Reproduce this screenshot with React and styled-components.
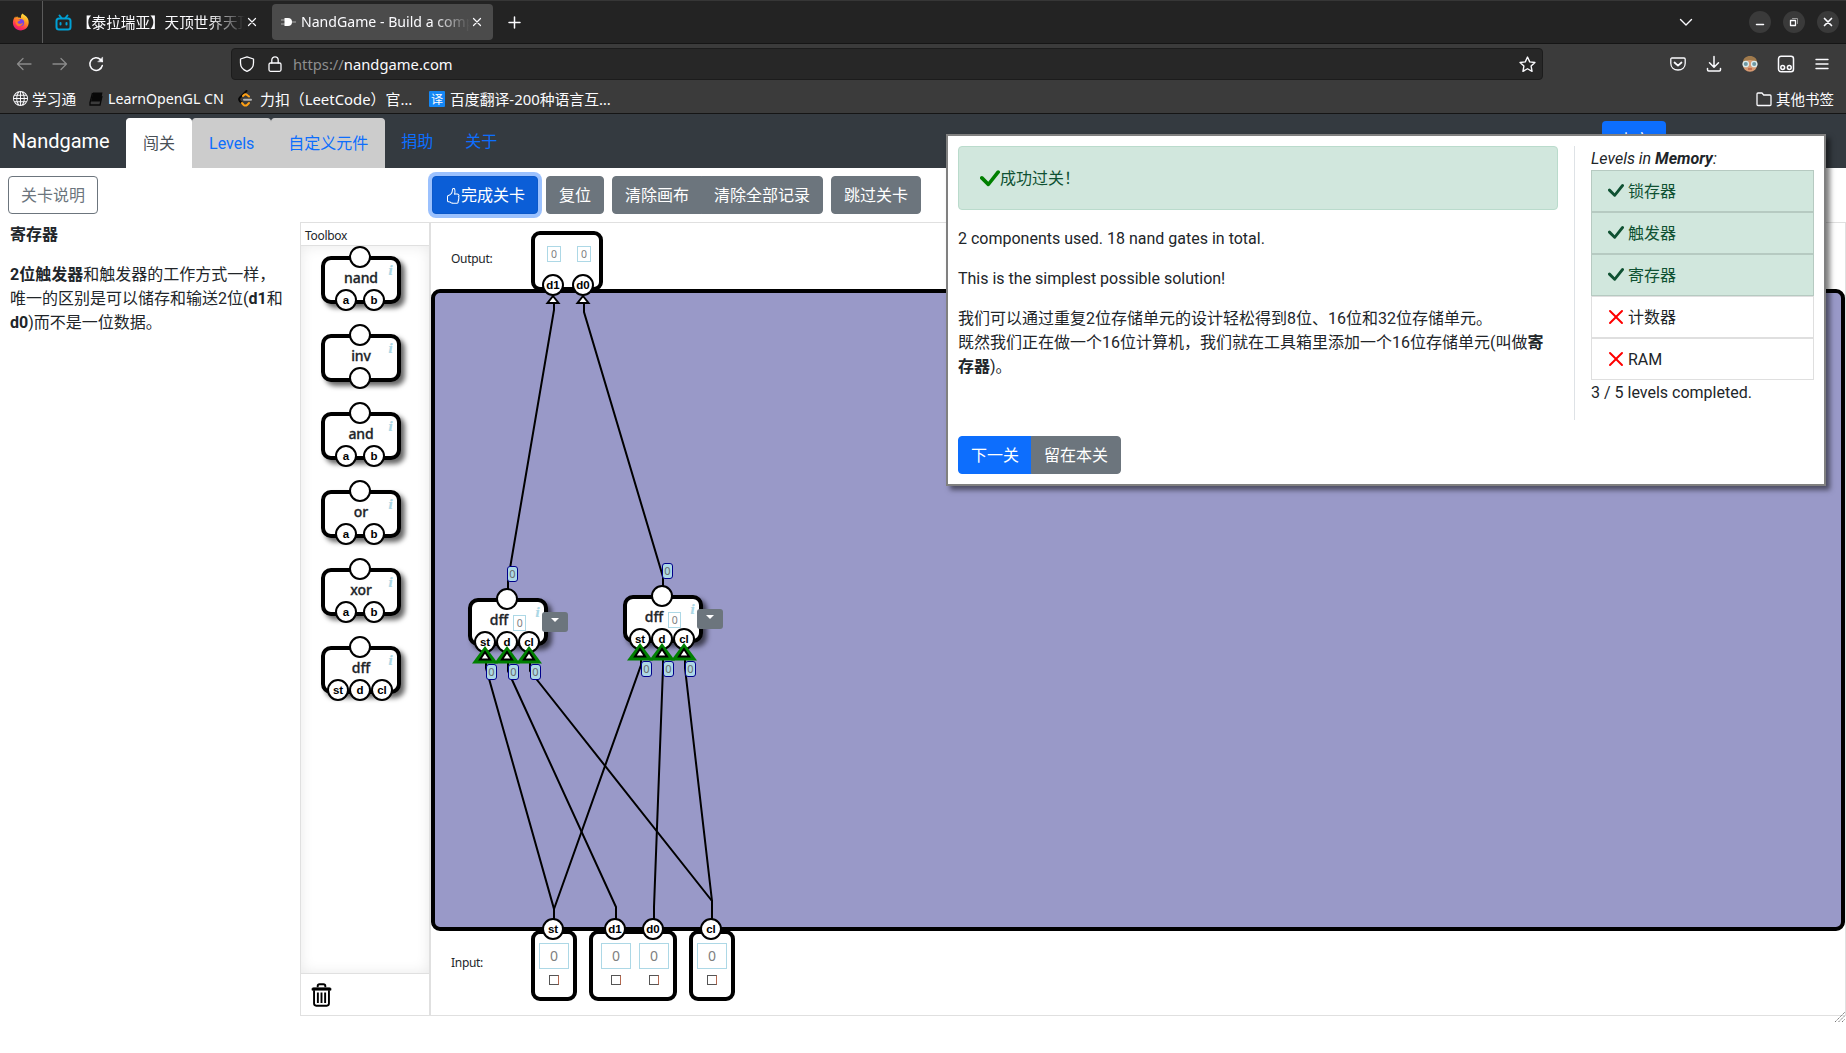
import React from "react";
import styled, { createGlobalStyle, css } from "styled-components";
import { BsHandThumbsUp, BsGlobe } from "react-icons/bs";

const uiFont = `"Noto Sans", "Noto Sans CJK SC", sans-serif`;
const pageFont = `Roboto, "Noto Sans CJK SC", sans-serif`;

const GlobalStyle = createGlobalStyle`
  *, *::before, *::after { box-sizing: border-box; }
  body { margin: 0; background: #fff; overflow: hidden; }
  p { margin: 0 0 16px; }
  svg { flex: none; }
`;

const Window = styled.div`
  width: 1846px;
  height: 1053px;
  display: flex;
  flex-direction: column;
  font-family: ${pageFont};
  font-size: 16px;
  line-height: 24px;
  color: #212529;
`;

/* ---------- browser chrome ---------- */

const TabStrip = styled.div`
  height: 44px;
  flex: none;
  display: flex;
  align-items: center;
  background: #232323;
  border-top: 1px solid #363636;
  border-bottom: 1px solid #151515;
  font: 14.5px/20px ${uiFont};
  color: #fbfbfe;
`;

const PinnedTab = styled.div`
  width: 43px;
  height: 100%;
  display: flex;
  align-items: center;
  justify-content: center;
  border-right: 1px solid #5b5b5b;
  margin-right: 4px;
`;

const Tab = styled.div`
  width: ${(p) => p.$width}px;
  height: 36px;
  display: flex;
  align-items: center;
  gap: ${(p) => p.$gap}px;
  padding: 0 11px 0 8px;
  border-radius: 4px;
  background: ${(p) => (p.$active ? "#4b4b4b" : "transparent")};
  margin-right: 4px;
`;

const TabTitle = styled.span`
  flex: 1;
  min-width: 0;
  margin-right: -3px;
  white-space: nowrap;
  font-size: ${(p) => p.$size}px;
  mask-image: linear-gradient(to right, #000 calc(100% - 36px), transparent 100%);
`;

const NewTab = styled.div`
  display: flex;
  margin-left: 11px;
`;

const WindowControls = styled.div`
  margin-left: auto;
  margin-right: 7px;
  display: flex;
  align-items: center;
  gap: 12px;
  svg { display: block; }
`;

const ControlCircle = styled.div`
  width: 22px;
  height: 22px;
  border-radius: 50%;
  background: #3a3a3a;
  display: flex;
  align-items: center;
  justify-content: center;
`;

const ListTabs = styled.div`
  margin-right: 44px;
`;

const NavBar = styled.div`
  height: 40px;
  flex: none;
  display: flex;
  align-items: center;
  background: #3b3b3b;
  padding: 0 15px 0 16px;
`;

const NavButtons = styled.div`
  display: flex;
  gap: 20px;
  width: 215px;
`;

const UrlBar = styled.div`
  width: 1312px;
  height: 32px;
  display: flex;
  align-items: center;
  background: #272727;
  border: 1px solid #1c1c1c;
  border-radius: 4px;
  padding: 0 6px 0 7px;
  font: 14.75px/20px ${uiFont};
  color: #fbfbfe;
`;

const UrlText = styled.span`
  flex: 1;
  margin-left: 10px;
`;

const Scheme = styled.span`
  color: #8e8e8e;
`;

const ShieldSlot = styled.span`
  display: flex;
  margin-right: 12px;
`;

const Extensions = styled.div`
  margin-left: auto;
  display: flex;
  gap: 18px;
`;

const BookmarkBar = styled.div`
  height: 30px;
  flex: none;
  display: flex;
  align-items: center;
  background: #3b3b3b;
  border-bottom: 1px solid #151515;
  padding: 0 12px 0 13px;
  font: 15px/20px ${uiFont};
  color: #fbfbfe;
`;

const Bookmark = styled.div`
  display: flex;
  align-items: center;
  gap: ${(p) => p.$gap || 4}px;
  width: ${(p) => (p.$width ? p.$width + "px" : "auto")};
  font-size: ${(p) => p.$size || 15}px;
  white-space: nowrap;
  margin-left: ${(p) => (p.$end ? "auto" : 0)};
`;

const TranslateBadge = styled.span`
  width: 16px;
  height: 16px;
  background: #1487f5;
  border-radius: 1px;
  font: 12px/15px "Noto Sans CJK SC", sans-serif;
  text-align: center;
`;

/* ---------- page header ---------- */

const Header = styled.header`
  height: 54px;
  flex: none;
  display: flex;
  align-items: flex-start;
  background: #343a40;
  padding: 4px 12px 0;
`;

const Brand = styled.div`
  width: 114px;
  font-size: 20px;
  line-height: 30px;
  padding-top: 8px;
  color: #fff;
`;

const NavTab = styled.div`
  height: 50px;
  padding: 13px 16px 0;
  border: 1px solid ${(p) => (p.$active ? "#fff" : "#ccc")};
  border-bottom: 0;
  border-radius: 4px 4px 0 0;
  background: ${(p) => (p.$active ? "#fff" : "#ccc")};
  color: ${(p) => (p.$active ? "#495057" : "#0d6efd")};
`;

const NavLink = styled.div`
  padding: 12px 16px 0;
  color: #0d6efd;
`;

const LangButton = styled.div`
  width: 64px;
  height: 38px;
  margin: 3px 168px 0 auto;
  border-radius: 4px;
  background: #0d6efd;
  color: #fff;
  text-align: center;
  line-height: 40px;
`;

/* ---------- page body ---------- */

const Body = styled.div`
  display: flex;
  flex: 1;
  min-height: 0;
`;

const Sidebar = styled.aside`
  width: 300px;
  flex: none;
  padding: 8px 8px 0;
`;

const Instructions = styled.div`
  padding: 9px 0 0 2px;
  white-space: nowrap;
`;

const Button = styled.button`
  height: 38px;
  font: 16px/24px ${pageFont};
  padding: 1px 12px 0;
  border: 1px solid #6c757d;
  border-radius: 4px;
  background: #6c757d;
  color: #fff;
  display: inline-flex;
  align-items: center;
  justify-content: center;
  white-space: nowrap;
  ${(p) =>
    p.$outline &&
    css`
      background: #fff;
      color: #6c757d;
    `}
  ${(p) =>
    p.$primary &&
    css`
      background: #0d6efd;
      border-color: #0d6efd;
    `}
  ${(p) =>
    p.$focused &&
    css`
      background: #0b5ed7;
      border-color: #0a58ca;
      box-shadow: 0 0 0 4px #9bc1fe;
    `}
`;

const ButtonGroup = styled.div`
  display: flex;
  ${Button}:first-child { border-radius: 4px 0 0 4px; }
  ${Button}:last-child { border-radius: 0 4px 4px 0; margin-left: -1px; }
`;

const Main = styled.main`
  flex: 1;
  display: flex;
  flex-direction: column;
`;

const Toolbar = styled.div`
  height: 54px;
  flex: none;
  display: flex;
  gap: 8px;
  padding: 8px 0 0 132px;
`;

const Editor = styled.div`
  height: 794px;
  display: flex;
`;

const Toolbox = styled.section`
  width: 130px;
  display: flex;
  flex-direction: column;
  border: 1px solid #e0e0e0;
`;

const ToolboxTitle = styled.div`
  height: 23px;
  border-bottom: 1px solid #e0e0e0;
  padding: 4px 0 0 4px;
  font: 12px/18px ${uiFont};
  letter-spacing: -0.3px;
`;

const ToolboxList = styled.div`
  flex: 1;
  display: flex;
  flex-direction: column;
  align-items: center;
  gap: 30px;
  padding: 10px 8px 0 0;
  box-shadow: inset 0 0 14px #e9e9e9;
`;

const TrashBar = styled.div`
  height: 42px;
  border-top: 1px solid #e0e0e0;
  padding: 9px 0 0 10px;
`;

/* ---------- diagram ---------- */

const Workspace = styled.section`
  position: relative;
  flex: 1;
  border: 1px solid #e0e0e0;
  padding-top: 66px;
  font: 12px/18px ${uiFont};
`;

const Board = styled.div`
  height: 642px;
  border: 4px solid #000;
  border-radius: 9px;
  background: #9999c8;
`;

const Placed = styled.div`
  position: absolute;
  left: ${(p) => p.$x}px;
  top: ${(p) => p.$y}px;
`;

const RowLabel = styled(Placed)`
  letter-spacing: -0.3px;
`;

const Wires = styled.svg`
  position: absolute;
  left: 0;
  top: 0;
  overflow: visible;
`;

const Gate = styled.div`
  position: relative;
  flex: none;
  width: 80px;
  height: 48px;
  border: 4px solid #000;
  border-radius: 10px;
  background: #fff;
  box-shadow: 4px 4px 5px rgba(0, 0, 0, 0.6);
  display: flex;
  justify-content: center;
  gap: 5px;
  padding-top: 8px;
  font: 500 14px/20px ${uiFont};
  letter-spacing: -0.1px;
  -webkit-text-stroke: 0.3px;
  color: #212529;
`;

const InfoMark = styled.span`
  position: absolute;
  right: 4px;
  top: 3px;
  font: italic bold 13px/16px "DejaVu Serif", serif;
  -webkit-text-stroke: 0;
  color: #add8e6;
`;

const Pin = styled.span`
  position: absolute;
  left: ${(p) => p.$x}px;
  top: ${(p) => p.$y}px;
  width: 22px;
  height: 22px;
  border: 2px solid #000;
  border-radius: 50%;
  background: #fff;
  color: #000;
  font: bold 11.5px/18px "Liberation Sans", Arial, sans-serif;
  letter-spacing: 0;
  -webkit-text-stroke: 0;
  display: flex;
  align-items: center;
  justify-content: center;
`;

const Value = styled.span`
  display: flex;
  align-items: center;
  justify-content: center;
  width: ${(p) => p.$w}px;
  height: ${(p) => p.$h}px;
  border: 1px solid #add8e6;
  background: #fff;
  color: #808080;
  font: ${(p) => p.$size}px/1 ${uiFont};
  -webkit-text-stroke: 0;
`;

const GateValue = styled(Value)`
  margin-top: 5px;
`;

const Signal = styled(Placed)`
  width: 11px;
  height: 16px;
  border: 1px solid #00008b;
  border-radius: 3px;
  background: #add8e6;
  color: #6a6a6a;
  font: 11px/14px ${uiFont};
  display: flex;
  justify-content: center;
`;

const MenuButton = styled(Placed)`
  width: 26px;
  height: 20px;
  border-radius: 3px;
  background: #6c757d;
  display: flex;
  justify-content: center;
  padding-top: 6px;
`;

const Caret = styled.span`
  width: 0;
  height: 0;
  border: 4px solid transparent;
  border-top-color: #fff;
  border-bottom: 0;
`;

const Terminal = styled(Placed)`
  width: ${(p) => p.$w}px;
  height: ${(p) => p.$h}px;
  border: 4px solid #000;
  border-radius: 9px;
  background: #fff;
  display: flex;
  justify-content: center;
  gap: ${(p) => p.$gap || 0}px;
  padding: ${(p) => p.$pad};
`;

const InputCell = styled.div`
  display: flex;
  flex-direction: column;
  align-items: center;
  gap: 6px;
`;

const BitToggle = styled.span`
  width: 10px;
  height: 10px;
  border: 1px solid #555;
  border-right-color: #b5684f;
`;

/* ---------- dialog ---------- */

const Dialog = styled.div`
  position: absolute;
  left: 946px;
  top: 134px;
  width: 880px;
  height: 352px;
  border: 2px solid #808080;
  background: #fff;
  box-shadow: 4px 4px 5px rgba(0, 0, 0, 0.5);
  padding: 10px;
  display: flex;
  flex-direction: column;
`;

const DialogBody = styled.div`
  height: 274px;
  display: flex;
`;

const Result = styled.div`
  width: 600px;
  margin-right: 16px;
`;

const Alert = styled.div`
  height: 64px;
  margin-bottom: 17px;
  border: 1px solid #badbcc;
  border-radius: 4px;
  background: #d1e7dd;
  color: #0f5132;
  display: flex;
  align-items: center;
  padding: 1px 0 0 21px;
`;

const LevelColumn = styled.div`
  flex: 1;
  border-left: 1px solid #dee2e6;
  padding: 0 0 0 16px;
`;

const LevelHeading = styled.div`
  height: 24px;
  padding-top: 1px;
  font-style: italic;
`;

const LevelItem = styled.div`
  width: 223px;
  height: 42px;
  border: 1px solid rgba(0, 0, 0, 0.125);
  padding: 0 16px;
  display: flex;
  align-items: center;
  gap: 4px;
  background: ${(p) => (p.$done ? "#d1e7dd" : "#fff")};
  color: ${(p) => (p.$done ? "#0f5132" : "#212529")};
`;

const LevelName = styled.span`
  padding-top: 1px;
`;

const LevelCount = styled.div`
  padding-top: 1px;
`;

const DialogActions = styled.div`
  margin-top: 16px;
`;

/* ---------- icons ---------- */

const Stroke = ({ w = 16, h = w, box = "0 0 16 16", sw = 1.3, children, color = "#fbfbfe" }) => (
  <svg width={w} height={h} viewBox={box} fill="none" stroke={color} strokeWidth={sw} strokeLinecap="round" strokeLinejoin="round">
    {children}
  </svg>
);

const CheckIcon = ({ size = 16, color = "currentColor" }) => (
  <svg width={size} height={size} viewBox="0 0 16 16" fill={color}>
    <path d="M13.485 1.431a1.473 1.473 0 0 1 2.104 2.062l-7.840 9.801a1.473 1.473 0 0 1-2.120.040L.431 8.138a1.473 1.473 0 0 1 2.084-2.083l4.111 4.112 6.820-8.690a.486.486 0 0 1 .040-.045z" />
  </svg>
);

const CrossIcon = () => (
  <svg width="16" height="16" viewBox="0 0 16 16" fill="#f00">
    <path d="M1.293 1.293a1 1 0 0 1 1.414 0L8 6.586l5.293-5.293a1 1 0 1 1 1.414 1.414L9.414 8l5.293 5.293a1 1 0 0 1-1.414 1.414L8 9.414l-5.293 5.293a1 1 0 0 1-1.414-1.414L6.586 8 1.293 2.707a1 1 0 0 1 0-1.414z" />
  </svg>
);

const FirefoxIcon = () => (
  <svg width="18" height="18" viewBox="0 0 18 18">
    <defs>
      <linearGradient id="fx" x1="0.8" y1="0" x2="0.3" y2="1">
        <stop offset="0" stopColor="#fff04a" />
        <stop offset="0.4" stopColor="#ff9a1f" />
        <stop offset="0.75" stopColor="#ff3750" />
        <stop offset="1" stopColor="#e3177b" />
      </linearGradient>
    </defs>
    <path d="M10.5 .5c1 1.400 4 2.500 5.300 5 2.300 4.500.2 11.800-6.800 11.900C3.800 17.400.8 13.500.9 9.300 1 6.500 2.200 4.500 3.300 3.400l.5 1.400 1.300-1.600.8 1.400c1.200-.3 2.500 0 3.200.6-.5-1.600 0-3.600 1.400-4.700z" fill="url(#fx)" />
    <circle cx="8.600" cy="9.600" r="3.600" fill="#7542e5" />
    <path d="M3.500 7c1.500-1.200 3.500-.9 5 0-1 1.300-2.600 1-3 2.200 .6 2.200 4 2 5.500.4-.3 3-3 4.200-5.200 3.300C4 12 3 9.500 3.500 7z" fill="#ff7a2a" />
  </svg>
);

const BiliIcon = () => (
  <svg width="17" height="17" viewBox="0 0 17 17" fill="none" stroke="#00a1d6" strokeWidth="2" strokeLinecap="round">
    <rect x="1.500" y="4.500" width="14" height="11" rx="2.500" />
    <path d="M4.500 1.500l2 2.500M12.500 1.500l-2 2.500M5.500 9v1.600M11.500 9v1.600" />
  </svg>
);

const GateIcon = () => (
  <svg width="16" height="16" viewBox="0 0 16 16">
    <path d="M1 6h5M1 10h5M11 8h5" stroke="#8c8c8c" strokeWidth="1.500" />
    <path d="M4.500 4h3.500a4 4 0 0 1 0 8H4.500z" fill="#fff" />
  </svg>
);

const CloseIcon = () => (
  <Stroke w={10} box="0 0 10 10" sw={1.2}>
    <path d="M1.500 1.500l7 7M8.500 1.500l-7 7" />
  </Stroke>
);

const AvatarIcon = () => (
  <svg width="18" height="18" viewBox="0 0 18 18">
    <circle cx="9" cy="9.500" r="7.300" fill="#d79a72" />
    <path d="M2 8C2 3 5 1 9 1s7 2 7 7c-2-2-4-3-7-3S4 6 2 8z" fill="#a07a4c" />
    <circle cx="4.800" cy="9" r="2.700" fill="#6f98a3" stroke="#dcebee" strokeWidth="1.300" />
    <circle cx="13.200" cy="9" r="2.700" fill="#6f98a3" stroke="#dcebee" strokeWidth="1.300" />
    <path d="M7 14h4" stroke="#b6523d" strokeWidth="1.300" />
  </svg>
);

const TrashIcon = () => (
  <svg width="21" height="24" viewBox="0 0 22 25" fill="none" stroke="#000">
    <path d="M7 4.500V3.200C7 1.900 7.800 1.300 9 1.300h4c1.200 0 2 .6 2 1.900v1.300" strokeWidth="2" />
    <path d="M1 7.500V6.300c0-1 .7-1.500 1.700-1.500h16.600c1 0 1.700.5 1.700 1.500v1.200z" fill="#000" strokeWidth="0.600" />
    <path d="M3.200 7.500v14c0 1.500.8 2.200 2.200 2.200h11.200c1.400 0 2.200-.7 2.200-2.200v-14" strokeWidth="2" />
    <path d="M7.200 10v11M11 10v11M14.800 10v11" strokeWidth="2" />
  </svg>
);

/* ---------- pieces ---------- */

const pinOffsets = { 1: [24], 2: [10, 38], 3: [2, 24, 46] };

function LogicGate({ name, pins, value }) {
  return (
    <Gate>
      <span>{name}</span>
      {value !== undefined && <GateValue $w={13} $h={16} $size={10.5}>{value}</GateValue>}
      <InfoMark>i</InfoMark>
      <Pin $x={24} $y={-14} />
      {pins.map((pin, i) => (
        <Pin key={i} $x={pinOffsets[pins.length][i]} $y={29}>{pin}</Pin>
      ))}
    </Gate>
  );
}

function PlacedGate({ x, y }) {
  return (
    <>
      <Placed $x={x} $y={y}>
        <LogicGate name="dff" pins={["st", "d", "cl"]} value="0" />
      </Placed>
      <MenuButton $x={x + 74} $y={y + 14}><Caret /></MenuButton>
      <Signal $x={x + 39} $y={y - 32}>0</Signal>
    </>
  );
}

const InputBit = () => (
  <InputCell>
    <Value $w={30} $h={26} $size={14}>0</Value>
    <BitToggle />
  </InputCell>
);

/* Workspace coordinates start at its inner top-left corner. */
const wirePaths = [
  "M123 81V87L77 357V367",
  "M153 81V89L232 354V364",
  "M55 440V445L123 686V696",
  "M77 440V448L185 684V696",
  "M99 440V448L281 678V696",
  "M210 437V442L123 686",
  "M232 437V445L223 684V696",
  "M254 437V445L281 678",
];

const gates = [
  { x: 37, y: 375 },
  { x: 192, y: 372 },
];

const tools = [
  ["nand", ["a", "b"]],
  ["inv", [""]],
  ["and", ["a", "b"]],
  ["or", ["a", "b"]],
  ["xor", ["a", "b"]],
  ["dff", ["st", "d", "cl"]],
];

const levels = [
  ["锁存器", true],
  ["触发器", true],
  ["寄存器", true],
  ["计数器", false],
  ["RAM", false],
];

export default function App() {
  return (
    <Window>
      <GlobalStyle />
      <TabStrip>
        <PinnedTab><FirefoxIcon /></PinnedTab>
        <Tab $width={221} $gap={5}>
          <BiliIcon />
          <TabTitle $size={14.6}>【泰拉瑞亚】天顶世界天顶</TabTitle>
          <CloseIcon />
        </Tab>
        <Tab $width={221} $gap={5} $active>
          <GateIcon />
          <TabTitle $size={14.1}>NandGame - Build a comp</TabTitle>
          <CloseIcon />
        </Tab>
        <NewTab>
          <Stroke w={13} box="0 0 13 13" sw={1.5}><path d="M6.500 1v11M1 6.500h11" /></Stroke>
        </NewTab>
        <WindowControls>
          <ListTabs>
            <Stroke w={14} box="0 0 14 14" sw={1.4}><path d="M1.500 4.500L7 10l5.500-5.500" /></Stroke>
          </ListTabs>
          <ControlCircle><Stroke w={10} box="0 0 10 10" sw={1.500}><path d="M1.500 7.500h7" /></Stroke></ControlCircle>
          <ControlCircle>
            <Stroke w={10} box="0 0 10 10" sw={1.300}>
              <rect x="1.500" y="3.500" width="5" height="5" />
              <path d="M3.500 1.500h5v5" stroke="#999" strokeWidth="1" />
            </Stroke>
          </ControlCircle>
          <ControlCircle><Stroke w={10} box="0 0 10 10" sw={1.700}><path d="M1.500 1.500l7 7M8.500 1.500l-7 7" /></Stroke></ControlCircle>
        </WindowControls>
      </TabStrip>

      <NavBar>
        <NavButtons>
          <Stroke color="#8a8a8a"><path d="M15 8H1.500M7 2.500L1.500 8 7 13.500" /></Stroke>
          <Stroke color="#8a8a8a"><path d="M1 8h13.500M9 2.500L14.500 8 9 13.500" /></Stroke>
          <Stroke sw={1.5}><path d="M14.300 9.500A6.300 6.300 0 1 1 12.600 3.600L14.300 5.500" /><path d="M14.600 1.300v4.500h-4.500z" fill="#fbfbfe" strokeWidth=".5" /></Stroke>
        </NavButtons>
        <UrlBar>
          <ShieldSlot>
            <Stroke w={16}><path d="M8 .8L14.500 3v4c0 4.500-3 7-6.500 8.300C4.500 14 1.500 11.500 1.500 7V3z" /></Stroke>
          </ShieldSlot>
          <Stroke w={16}><rect x="2" y="7" width="12" height="8.300" rx="1.500" /><path d="M4.800 7V4a3.200 3.200 0 0 1 6.400 0v3" /></Stroke>
          <UrlText><Scheme>https://</Scheme>nandgame.com</UrlText>
          <Stroke w={17}><path d="M8 1l2.100 4.500 4.900.6-3.600 3.400.9 4.900L8 12l-4.300 2.400.9-4.900L1 6.100l4.900-.6z" /></Stroke>
        </UrlBar>
        <Extensions>
          <Stroke w={18} box="0 0 18 18"><path d="M3 3h12c.8 0 1.200.5 1.200 1.200v4C16.200 12.500 13 15 9 15s-7.200-2.500-7.200-6.800v-4C1.800 3.500 2.200 3 3 3z" /><path d="M5.500 7.500L9 10.700l3.500-3.200" strokeWidth="1.700" /></Stroke>
          <Stroke w={18} box="0 0 18 18" sw={1.500}><path d="M9 1.500v10.500M4.500 7.700L9 12.200l4.500-4.500M2.500 13.500v1.300c0 .8.500 1.200 1.200 1.200h10.600c.7 0 1.200-.4 1.200-1.200v-1.300" /></Stroke>
          <AvatarIcon />
          <Stroke w={18} box="0 0 18 18" sw={1.500}><rect x="1.500" y="1.300" width="15" height="15.400" rx="2.500" /><circle cx="5.700" cy="12.500" r="1.900" /><circle cx="12.300" cy="12.500" r="1.900" /></Stroke>
          <Stroke w={18} box="0 0 18 18" sw={1.400}><path d="M3 4.500h12M3 9h12M3 13.500h12" /></Stroke>
        </Extensions>
      </NavBar>

      <BookmarkBar>
        <Bookmark $width={76} $gap={4} $size={14.700}><BsGlobe size={15} />学习通</Bookmark>
        <Bookmark $width={148} $gap={5} $size={14.2}>
          <svg width="14" height="14" viewBox="0 0 14 14">
            <path d="M4 .5h9.500L11.500 9.500H2z" fill="#080808" />
            <path d="M3.500 1L1 10.500v2.500h10l2-9" fill="none" stroke="#080808" strokeWidth="1.300" />
          </svg>
          LearnOpenGL CN
        </Bookmark>
        <Bookmark $width={192} $gap={7} $size={14.900}>
          <svg width="16" height="17" viewBox="0 0 16 17" fill="none" strokeWidth="2" strokeLinecap="round">
            <path d="M9.500 1L3 7.500c-1.200 1.200-1.200 2.500 0 3.700L5 13" stroke="#080808" />
            <path d="M5 13l1.500 1.700c1.200 1.200 2.600 1.200 3.800 0L12 13M6 6l1-1c1.200-1.200 2.400-.7 3.400.2L12 6.500" stroke="#ffa116" />
            <path d="M7 9.700h7" stroke="#b3b3b3" />
          </svg>
          力扣（LeetCode）官…
        </Bookmark>
        <Bookmark $gap={5} $size={14.850}><TranslateBadge>译</TranslateBadge>百度翻译-200种语言互…</Bookmark>
        <Bookmark $end $gap={4} $size={14.500}>
          <Stroke w={16}><path d="M1 13.500V3c0-.6.400-1 1-1h4l1.700 2H14c.6 0 1 .4 1 1v8.500c0 .6-.4 1-1 1H2c-.6 0-1-.4-1-1z" /></Stroke>
          其他书签
        </Bookmark>
      </BookmarkBar>

      <Header>
        <Brand>Nandgame</Brand>
        <NavTab $active>闯关</NavTab>
        <NavTab>Levels</NavTab>
        <NavTab>自定义元件</NavTab>
        <NavLink>捐助</NavLink>
        <NavLink>关于</NavLink>
        <LangButton>中文</LangButton>
      </Header>

      <Body>
        <Sidebar>
          <Button $outline>关卡说明</Button>
          <Instructions>
            <p><b>寄存器</b></p>
            <p>
              <b>2位触发器</b>和触发器的工作方式一样，<br />
              唯一的区别是可以储存和输送2位(<b>d1</b>和<br />
              <b>d0</b>)而不是一位数据。
            </p>
          </Instructions>
        </Sidebar>
        <Main>
          <Toolbar>
            <Button $focused><BsHandThumbsUp size={16} />完成关卡</Button>
            <Button>复位</Button>
            <ButtonGroup>
              <Button>清除画布</Button>
              <Button>清除全部记录</Button>
            </ButtonGroup>
            <Button>跳过关卡</Button>
          </Toolbar>
          <Editor>
            <Toolbox>
              <ToolboxTitle>Toolbox</ToolboxTitle>
              <ToolboxList>
                {tools.map(([name, pins]) => <LogicGate key={name} name={name} pins={pins} />)}
              </ToolboxList>
              <TrashBar><TrashIcon /></TrashBar>
            </Toolbox>
            <Workspace>
              <Terminal $x={100} $y={8} $w={72} $h={60} $gap={16} $pad="11px 0 0 4px">
                <Value $w={14} $h={16} $size={10.5}>0</Value>
                <Value $w={14} $h={16} $size={10.5}>0</Value>
              </Terminal>
              <Board />
              <Terminal $x={100} $y={707} $w={46} $h={71} $pad="9px 0 0">
                <InputBit />
              </Terminal>
              <Terminal $x={158} $y={707} $w={88} $h={71} $gap={8} $pad="9px 0 0 4px">
                <InputBit />
                <InputBit />
              </Terminal>
              <Terminal $x={258} $y={707} $w={46} $h={71} $pad="9px 0 0">
                <InputBit />
              </Terminal>
              <RowLabel $x={20} $y={27}>Output:</RowLabel>
              <RowLabel $x={20} $y={731}>Input:</RowLabel>
              <Wires width="1414" height="792">
                {wirePaths.map((d) => <path key={d} d={d} fill="none" stroke="#000" strokeWidth="2" />)}
                {[122, 152].map((x) => (
                  <path key={x} d={`M${x} 73l5.500 7h-11z`} fill="#fff" stroke="#000" strokeWidth="2" />
                ))}
              </Wires>
              {gates.map((g) => <PlacedGate key={g.x} {...g} />)}
              <Wires width="1414" height="792">
                {gates.flatMap((g) => [17, 39, 61].map((dx) => (
                  <g key={g.x + dx} transform={`translate(${g.x + dx} ${g.y + 48})`}>
                    <path d="M0 0L13 17.500h-26z" fill="#008000" />
                    <path d="M0 6l5 7.500h-10z" fill="#fff" stroke="#000" strokeWidth="2" />
                  </g>
                )))}
              </Wires>
              {gates.flatMap((g) => [18, 40, 62].map((dx) => (
                <Signal key={g.x + dx} $x={g.x + dx} $y={g.y + 66}>0</Signal>
              )))}
              <Pin $x={111} $y={51}>d1</Pin>
              <Pin $x={141} $y={51}>d0</Pin>
              <Pin $x={111} $y={695}>st</Pin>
              <Pin $x={173} $y={695}>d1</Pin>
              <Pin $x={211} $y={695}>d0</Pin>
              <Pin $x={269} $y={695}>cl</Pin>
              <Placed $x={1403} $y={787}>
                <svg width="12" height="12" viewBox="0 0 12 12" stroke="#777" strokeWidth="1" strokeDasharray="1.500 .7">
                  <path d="M1 11L11 1M4.500 11L11 4.500M8 11l3-3" />
                </svg>
              </Placed>
            </Workspace>
          </Editor>
        </Main>
      </Body>

      <Dialog>
        <DialogBody>
          <Result>
            <Alert><CheckIcon size={20} color="#008000" />成功过关！</Alert>
            <p>2 components used. 18 nand gates in total.</p>
            <p>This is the simplest possible solution!</p>
            <p>
              我们可以通过重复2位存储单元的设计轻松得到8位、16位和32位存储单元。<br />
              既然我们正在做一个16位计算机，我们就在工具箱里添加一个16位存储单元(叫做<b>寄<br />存器</b>)。
            </p>
          </Result>
          <LevelColumn>
            <LevelHeading>Levels in <b>Memory</b>:</LevelHeading>
            {levels.map(([name, done]) => (
              <LevelItem key={name} $done={done}>
                {done ? <CheckIcon /> : <CrossIcon />}
                <LevelName>{name}</LevelName>
              </LevelItem>
            ))}
            <LevelCount>3 / 5 levels completed.</LevelCount>
          </LevelColumn>
        </DialogBody>
        <DialogActions>
          <ButtonGroup>
            <Button $primary>下一关</Button>
            <Button>留在本关</Button>
          </ButtonGroup>
        </DialogActions>
      </Dialog>
    </Window>
  );
}
